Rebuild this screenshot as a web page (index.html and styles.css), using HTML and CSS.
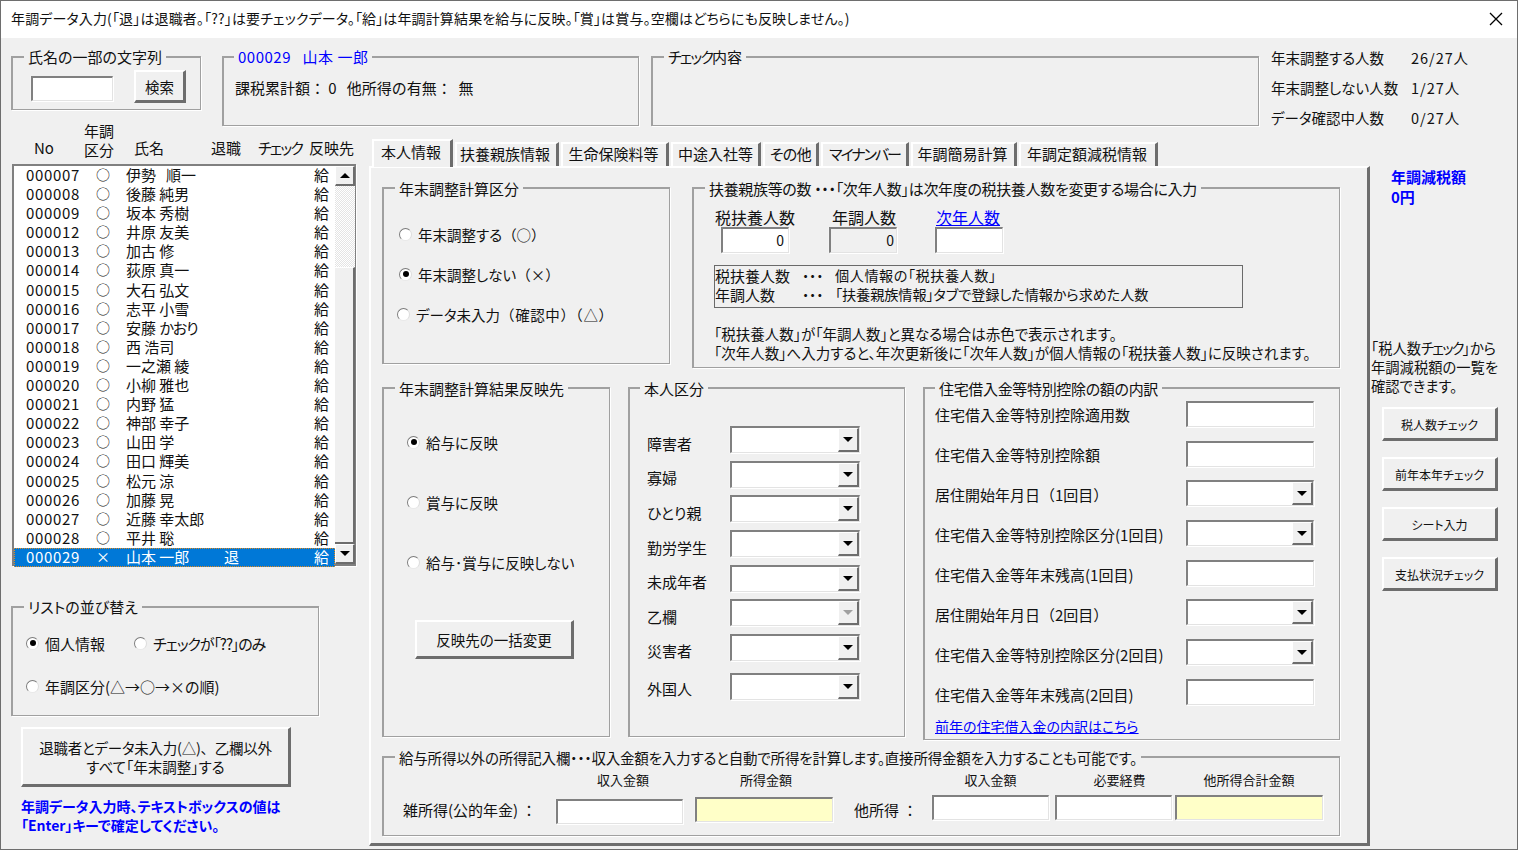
FILE: index.html
```html
<!DOCTYPE html>
<html lang="ja">
<head>
<meta charset="utf-8">
<title>年調データ入力</title>
<link rel="stylesheet" href="styles.css">
</head>
<body>
<div class="window">
  <header class="titlebar">
    <span class="title">年調データ入力(「退」は退職者。「??」は要チェックデータ。「給」は年調計算結果を給与に反映。「賞」は賞与。空欄はどちらにも反映しません。)</span>
    <svg class="close" viewBox="0 0 14 14" width="14" height="14"><path d="M1 1L13 13M13 1L1 13" stroke="#000" stroke-width="1.3" fill="none"/></svg>
  </header>

  <section class="top">
    <div class="group g-search">
      <span class="legend">氏名の一部の文字列</span>
      <div class="search-row">
        <div class="field search-input"></div>
        <div class="btn search-btn">検索</div>
      </div>
    </div>
    <div class="group g-person">
      <span class="legend blue legend-id">000029&nbsp;&nbsp; 山本 一郎</span>
      <div class="person-line">課税累計額： 0&nbsp;&nbsp; 他所得の有無：&nbsp; 無</div>
    </div>
    <div class="group g-check"><span class="legend"><span class="cond">チェック</span>内容</span></div>
    <div class="stats">
      <span>年末調整する人数</span><span class="ratio">26/27人</span>
      <span>年末調整しない人数</span><span class="ratio">1/27人</span>
      <span>データ確認中人数</span><span class="ratio">0/27人</span>
    </div>
  </section>

  <section class="content">
    <aside class="left">
      <div class="list-head">
        <span>No</span><span>年調<br>区分</span><span>氏名</span><span>退職</span><span class="cond">チェック</span><span>反映先</span>
      </div>
      <div class="list">
        <div class="rows">
          <div class="row"><span>000007</span><span class="mark">○</span><span>伊勢&nbsp;&nbsp;&nbsp;順一</span><span></span><span>給</span></div>
          <div class="row"><span>000008</span><span class="mark">○</span><span>後藤 純男</span><span></span><span>給</span></div>
          <div class="row"><span>000009</span><span class="mark">○</span><span>坂本 秀樹</span><span></span><span>給</span></div>
          <div class="row"><span>000012</span><span class="mark">○</span><span>井原 友美</span><span></span><span>給</span></div>
          <div class="row"><span>000013</span><span class="mark">○</span><span>加古 修</span><span></span><span>給</span></div>
          <div class="row"><span>000014</span><span class="mark">○</span><span>荻原 真一</span><span></span><span>給</span></div>
          <div class="row"><span>000015</span><span class="mark">○</span><span>大石 弘文</span><span></span><span>給</span></div>
          <div class="row"><span>000016</span><span class="mark">○</span><span>志平 小雪</span><span></span><span>給</span></div>
          <div class="row"><span>000017</span><span class="mark">○</span><span>安藤 <span class="kana">かおり</span></span><span></span><span>給</span></div>
          <div class="row"><span>000018</span><span class="mark">○</span><span>西 浩司</span><span></span><span>給</span></div>
          <div class="row"><span>000019</span><span class="mark">○</span><span>一之瀬 綾</span><span></span><span>給</span></div>
          <div class="row"><span>000020</span><span class="mark">○</span><span>小柳 雅也</span><span></span><span>給</span></div>
          <div class="row"><span>000021</span><span class="mark">○</span><span>内野 猛</span><span></span><span>給</span></div>
          <div class="row"><span>000022</span><span class="mark">○</span><span>神部 幸子</span><span></span><span>給</span></div>
          <div class="row"><span>000023</span><span class="mark">○</span><span>山田 学</span><span></span><span>給</span></div>
          <div class="row"><span>000024</span><span class="mark">○</span><span>田口 輝美</span><span></span><span>給</span></div>
          <div class="row"><span>000025</span><span class="mark">○</span><span>松元 涼</span><span></span><span>給</span></div>
          <div class="row"><span>000026</span><span class="mark">○</span><span>加藤 晃</span><span></span><span>給</span></div>
          <div class="row"><span>000027</span><span class="mark">○</span><span>近藤 幸太郎</span><span></span><span>給</span></div>
          <div class="row"><span>000028</span><span class="mark">○</span><span>平井 聡</span><span></span><span>給</span></div>
          <div class="row selected"><span>000029</span><span class="mark">×</span><span>山本 一郎</span><span>退</span><span>給</span></div>
        </div>
        <div class="scrollbar">
          <div class="sb-btn"><i class="tri up"></i></div>
          <div class="sb-track"></div>
          <div class="sb-thumb"></div>
          <div class="sb-btn"><i class="tri"></i></div>
        </div>
      </div>

      <div class="group g-sort">
        <span class="legend">リストの並び替え</span>
        <div class="sort-row">
          <label class="radio"><i class="dot on"></i>個人情報</label>
          <label class="radio sort-second"><i class="dot"></i><span class="sort-check">チェックが「??」のみ</span></label>
        </div>
        <div class="sort-row next">
          <label class="radio"><i class="dot"></i>年調区分(△→○→×の順)</label>
        </div>
      </div>
      <div class="btn big-btn"><span><span class="big-first">退職者とデータ未入力(△)<span class="fw">、</span>乙欄以外</span><br>すべて「年末調整」する</span></div>
      <p class="notice">年調データ入力時、テキストボックスの値は<br>「Enter」キーで確定してください。</p>
    </aside>

    <main class="center">
      <nav class="tabs">
        <div class="tab active">本人情報</div>
        <div class="tab t2">扶養親族情報</div>
        <div class="tab t3">生命保険料等</div>
        <div class="tab t4">中途入社等</div>
        <div class="tab t5">その他</div>
        <div class="tab t6"><span class="cond2">マイナンバー</span></div>
        <div class="tab t7">年調簡易計算</div>
        <div class="tab t8">年調定額減税情報</div>
      </nav>
      <div class="panel">
        <div class="panel-row">
          <div class="group g-calc">
            <span class="legend">年末調整計算区分</span>
            <label class="radio"><i class="dot"></i><span>年末調整する<span class="fw">（○）</span></span></label>
            <label class="radio"><i class="dot on"></i><span>年末調整しない<span class="fw">（×）</span></span></label>
            <label class="radio shifted"><i class="dot"></i><span>データ未入力<span class="fw wide">（確認中）（△）</span></span></label>
          </div>
          <div class="group g-dep">
            <span class="legend tight">扶養親族等の数 ・・・「次年人数」は次年度の税扶養人数を変更する場合に入力</span>
            <div class="counts">
              <div class="count c1"><span class="big">税扶養人数</span><div class="field num">0</div></div>
              <div class="count c2"><span class="big">年調人数</span><div class="field num disabled">0</div></div>
              <div class="count c3"><a class="big link">次年人数</a><div class="field num"></div></div>
            </div>
            <div class="explain">
              <div class="ex-line"><span class="ex-k">税扶養人数</span><span class="ex-d">・・・</span><span class="ex-a">個人情報の「税扶養人数」</span></div>
              <div class="ex-line"><span class="ex-k">年調人数</span><span class="ex-d">・・・</span><span class="ex-b">「扶養親族情報」タブで登録した情報から求めた人数</span></div>
            </div>
            <p class="dep-note">「税扶養人数」が「年調人数」と異なる場合は赤色で表示されます。<br>「次年人数」へ入力すると、年次更新後に「次年人数」が個人情報の「税扶養人数」に反映されます。</p>
          </div>
        </div>

        <div class="panel-row r2">
          <div class="group g-ref">
            <span class="legend">年末調整計算結果反映先</span>
            <label class="radio"><i class="dot on"></i>給与に反映</label>
            <label class="radio"><i class="dot"></i>賞与に反映</label>
            <label class="radio"><i class="dot"></i>給与･賞与に反映しない</label>
            <div class="btn ref-btn">反映先の一括変更</div>
          </div>
          <div class="group g-self">
            <span class="legend">本人区分</span>
            <div class="kv"><span>障害者</span><div class="field combo"><b><i class="tri"></i></b></div></div>
            <div class="kv"><span>寡婦</span><div class="field combo"><b><i class="tri"></i></b></div></div>
            <div class="kv"><span>ひとり親</span><div class="field combo"><b><i class="tri"></i></b></div></div>
            <div class="kv"><span>勤労学生</span><div class="field combo"><b><i class="tri"></i></b></div></div>
            <div class="kv"><span>未成年者</span><div class="field combo"><b><i class="tri"></i></b></div></div>
            <div class="kv"><span>乙欄</span><div class="field combo"><b><i class="tri off"></i></b></div></div>
            <div class="kv near"><span>災害者</span><div class="field combo"><b><i class="tri"></i></b></div></div>
            <div class="kv near last"><span>外国人</span><div class="field combo"><b><i class="tri"></i></b></div></div>
          </div>
          <div class="group g-loan">
            <span class="legend tight">住宅借入金等特別控除の額の内訳</span>
            <div class="lr"><span>住宅借入金等特別控除適用数</span><div class="field"></div></div>
            <div class="lr"><span>住宅借入金等特別控除額</span><div class="field"></div></div>
            <div class="lr"><span>居住開始年月日<span class="fw">（1回目）</span></span><div class="field combo"><b><i class="tri"></i></b></div></div>
            <div class="lr"><span>住宅借入金等特別控除区分(1回目)</span><div class="field combo"><b><i class="tri"></i></b></div></div>
            <div class="lr"><span>住宅借入金等年末残高(1回目)</span><div class="field"></div></div>
            <div class="lr"><span>居住開始年月日<span class="fw">（2回目）</span></span><div class="field combo"><b><i class="tri"></i></b></div></div>
            <div class="lr"><span>住宅借入金等特別控除区分(2回目)</span><div class="field combo"><b><i class="tri"></i></b></div></div>
            <div class="lr"><span>住宅借入金等年末残高(2回目)</span><div class="field"></div></div>
            <a class="link loan-link">前年の住宅借入金の内訳はこちら</a>
          </div>
        </div>

        <div class="group g-other">
          <span class="legend other-legend">給与所得以外の所得記入欄・・・収入金額を入力すると自動で所得を計算します。直接所得金額を入力することも可能です。</span>
          <div class="other-grid">
            <span></span><span class="hd n1">収入金額</span><span></span><span class="hd n2">所得金額</span><span></span><span></span><span class="hd">収入金額</span><span></span><span class="hd n3">必要経費</span><span></span><span class="hd">他所得合計金額</span>
            <span class="ol">雑所得(公的年金)<span class="fw"> ：</span></span><div class="field f1"></div><span></span><div class="field yellow f2"></div><span></span><span class="ol">他所得<span class="fw"> ：</span></span><div class="field"></div><span></span><div class="field"></div><span></span><div class="field yellow"></div>
          </div>
        </div>
      </div>
    </main>

    <aside class="right">
      <p class="tax">年調減税額<br>0円</p>
      <p class="hint">「税人数<span class="cond">チェック</span>」から<br>年調減税額の一覧を<br>確認できます。</p>
      <div class="btn side-btn">税人数チェック</div>
      <div class="btn side-btn">前年本年チェック</div>
      <div class="btn side-btn">シート入力</div>
      <div class="btn side-btn">支払状況チェック</div>
    </aside>
  </section>
</div>
</body>
</html>
```
FILE: styles.css
```css
* { box-sizing: border-box; }
html, body { margin: 0; padding: 0; }
body {
  font-family: "Noto Sans CJK JP", "Noto Sans", sans-serif;
  font-size: 15px;
  font-feature-settings: "palt";
  color: #111;
  background: #f0f0f0;
}
p { margin: 0; }
i, b { display: block; font-style: normal; }
.fw { font-feature-settings: normal; }
.wide { letter-spacing: .6px; }
.cond { letter-spacing: -1.8px; }
.cond2 { letter-spacing: -2px; }
.kana { letter-spacing: -1px; }

.window {
  width: 1518px; height: 850px;
  border: 1px solid #6e6e6e;
  background: #f0f0f0;
  overflow: hidden;
}
.titlebar {
  height: 37px; background: #fff;
  display: flex; align-items: center; justify-content: space-between;
  padding: 0 15px 0 10px;
  font-size: 14px;
}
.title { padding-bottom: 3px; letter-spacing: .14px; }
.close { margin-bottom: 1px; margin-right: -1px; }

/* group boxes */
.group {
  position: relative;
  border-style: solid;
  border-color: #a0a0a0;
  border-width: 2px 1px 1px 2px;
  box-shadow: 1px 1px 0 #fff;
  flex: none;
}
.legend {
  position: absolute; top: -11px; left: 11px;
  padding: 0 4px;
  background: #f0f0f0;
  line-height: 20px;
  white-space: nowrap;
}
.panel .legend { top: -10px; }
.g-self .legend, .g-loan .legend { left: 10px; }
.legend-id { left: 10px; letter-spacing: .5px; }
.tight { letter-spacing: -.33px; }
.other-legend { font-size: 14.5px; letter-spacing: -.19px; }
.blue { color: #0000ff; }

/* common controls */
.btn {
  background: #f0f0f0;
  border-style: solid;
  border-color: #fff #6d6d6d #6d6d6d #fff;
  border-width: 2px 3px 3px 2px;
  display: flex; align-items: center; justify-content: center;
  text-align: center;
  font-size: 14.5px;
}
.field {
  background: #fff;
  border-style: solid;
  border-color: #808080 #e3e3e3 #e3e3e3 #808080;
  border-width: 2px 1px 1px 2px;
  box-shadow: 1px 1px 0 #fff, -1px 0 0 #f4f4f4;
  height: 26px;
}
.combo { display: flex; justify-content: flex-end; }
.combo b {
  width: 21px; height: 100%;
  background: #f0f0f0;
  border-style: solid;
  border-color: #fff #6d6d6d #6d6d6d #fff;
  border-width: 1px 2px 2px 1px;
  display: flex; align-items: center; justify-content: center;
}
.tri {
  width: 0; height: 0;
  border-left: 5px solid transparent;
  border-right: 5px solid transparent;
  border-top: 5px solid #000;
}
.tri.up { border-top: 0; border-bottom: 5px solid #000; }
.tri.off { border-top-color: #a0a0a0; }

.radio {
  display: flex; align-items: center;
  height: 20px; white-space: nowrap;
}
.dot {
  width: 13px; height: 13px; margin-right: 6px;
  flex: none;
  border-radius: 50%;
  background: #fff;
  border: 1px solid;
  border-color: #7c7c7c #dcdcdc #e8e8e8 #7c7c7c;
  display: flex; align-items: center; justify-content: center;
}
.dot.on::after {
  content: ""; width: 6px; height: 6px;
  border-radius: 50%; background: #000;
}
.link { color: #0000ff; text-decoration: underline; }

/* top */
.top { display: flex; margin-left: 10px; padding-top: 18px; height: 86px; }
.g-search { width: 190px; height: 54px; }
.search-row { display: flex; padding: 12px 0 0 18px; }
.search-input { width: 82px; height: 25px; margin-top: 6px; }
.search-btn { width: 52px; height: 33px; margin-left: 21px; }
.g-person { width: 417px; height: 70px; margin-left: 21px; }
.person-line { padding: 20px 0 0 11px; line-height: 20px; font-feature-settings: normal; white-space: nowrap; }
.g-check { width: 608px; height: 70px; margin-left: 12px; }
.stats {
  margin: -14px 0 0 12px;
  display: grid; grid-template-columns: 140px auto;
  grid-auto-rows: 30px; align-items: center;
  font-size: 14.5px;
}
.ratio { letter-spacing: .95px; }

/* content columns */
.content { display: flex; margin-left: 10px; }
.left { width: 358px; flex: none; }
.center { width: 1001px; flex: none; padding-top: 14px; }
.right { flex: none; padding-left: 1px; }

/* list */
.list-head {
  height: 36px; display: flex; align-items: flex-end;
  padding: 0 0 1px 23px;
  line-height: 19px;
}
.list-head span { flex: none; padding-bottom: 2px; white-space: nowrap; }
.list-head span:nth-child(1) { width: 50px; }
.list-head span:nth-child(2) { width: 50px; padding-bottom: 0; }
.list-head span:nth-child(3) { width: 77px; }
.list-head span:nth-child(4) { width: 47px; }
.list-head span:nth-child(5) { width: 51px; }
.list {
  margin: 4px 0 0 1px; width: 344px; height: 402px;
  background: #fff;
  border-style: solid;
  border-color: #808080;
  border-width: 2px 1px 2px 2px;
  box-shadow: 1px 1px 0 #fff;
  display: flex;
}
.rows { flex: 1; min-width: 0; display: flex; flex-direction: column; }
.row {
  height: 19.1px; flex: none;
  display: grid;
  grid-template-columns: 62px 30px 106px 90px 20px;
  padding-left: 12px;
  line-height: 17px;
  white-space: nowrap;
}
.row > span:first-child { letter-spacing: .65px; }
.row > span:nth-child(3) { padding-left: 8px; }
.mark { text-align: center; font-size: 14px; }
.selected {
  background: #0078d7; color: #fff;
  outline: 1px dotted #e08a20; outline-offset: -1px;
}
.scrollbar { width: 20px; flex: none; display: flex; flex-direction: column; }
.sb-btn {
  height: 20px; flex: none;
  background: #f0f0f0;
  border-style: solid;
  border-color: #fff #6d6d6d #6d6d6d #fff;
  border-width: 1px 2px 2px 1px;
  display: flex; align-items: center; justify-content: center;
}
.sb-track {
  height: 81px; flex: none;
  background: repeating-conic-gradient(#fff 0 25%, #e4e4e4 0 50%) 0 0 / 2px 2px;
}
.sb-thumb {
  flex: 1;
  background: #f0f0f0;
  border-top: 1px solid #fff;
  border-bottom: 2px solid #6d6d6d;
  border-right: 2px solid #6d6d6d;
}

/* sort group */
.g-sort { width: 308px; height: 110px; margin-top: 40px; }
.sort-row { display: flex; padding: 25px 0 0 13px; }
.sort-row.next { padding-top: 23px; }
.sort-second { margin-left: 29px; }
.sort-check { letter-spacing: -1.1px; }
.big-btn { width: 270px; height: 60px; margin: 11px 0 0 10px; line-height: 19px; }
.big-first { letter-spacing: -.25px; }
.notice {
  margin: 10px 0 0 10px;
  color: #0000ff; font-weight: 700;
  line-height: 19px; font-size: 14px;
}

/* tabs */
.tabs { display: flex; align-items: flex-end; height: 28px; padding-left: 3px; }
.tab {
  height: 24px; margin-right: 2px; flex: none;
  border-style: solid;
  border-color: #fff #6d6d6d transparent #fff;
  border-width: 2px 3px 0 2px;
  display: flex; align-items: center; justify-content: center;
  padding-bottom: 3px;
  background: #f0f0f0;
}
.tab.active { height: 28px; width: 81px; align-items: flex-start; padding: 0 2px 0 0; margin-bottom: -1px; position: relative; }
.t2 { width: 104px; padding-right: 3px; }
.t3 { width: 108px; padding-right: 2px; }
.t4 { width: 90px; }
.t5 { width: 56px; letter-spacing: -.6px; }
.t6 { width: 88px; }
.t7 { width: 106px; padding-right: 2px; }
.t8 { width: 139px; padding-right: 2px; }
.panel {
  width: 1001px; height: 680px;
  border-style: solid;
  border-color: #fff #6d6d6d #6d6d6d #fff;
  border-width: 2px 3px 3px 2px;
  padding: 19px 0 0 11px;
}
.panel-row { display: flex; }
.panel-row.r2 { margin-top: 19px; }

/* 年末調整計算区分 */
.g-calc { width: 288px; height: 177px; margin-right: 22px; padding: 35px 0 0 15px; }
.g-calc .radio { margin-bottom: 20px; font-size: 14.5px; }
.g-calc .shifted { margin-left: -2px; }
.g-dep { width: 648px; height: 181px; }
.counts { display: flex; padding: 18px 0 0 21px; }
.count { flex: none; }
.big { display: block; height: 20px; line-height: 20px; font-size: 16px; white-space: nowrap; }
.c1 { width: 114px; }
.c2 { width: 106px; }
.c1 .num { margin-left: 6px; }
.c2 .big { margin-left: 3px; }
.c3 .big { margin-left: 1px; }
.num {
  width: 68px; height: 26px;
  text-align: right; padding-right: 4px;
  line-height: 23px; font-size: 14px;
}
.c2 .num { padding-right: 2px; }
.disabled { background: #f0f0f0; }
.explain {
  margin: 12px 0 0 20px; width: 529px; height: 43px;
  border: 1px solid #6a6a6a;
  line-height: 19px; font-size: 14.2px;
}
.ex-line { display: flex; }
.ex-k { width: 87px; font-size: 15px; }
.ex-d { width: 33px; }
.ex-a { letter-spacing: .5px; }
.ex-b { letter-spacing: -.1px; }
.dep-note { margin: 16px 0 0 20px; line-height: 19px; font-size: 14.5px; white-space: nowrap; }

/* 反映先 */
.g-ref { width: 228px; height: 350px; margin-right: 18px; padding: 43px 0 0 23px; }
.g-ref .radio { margin-bottom: 40px; font-size: 14.5px; }
.ref-btn { width: 159px; height: 39px; margin: 48px 0 0 8px; }

/* 本人区分 */
.g-self { width: 277px; height: 350px; margin-right: 18px; padding: 37px 0 0 17px; }
.kv { display: flex; align-items: center; height: 27px; margin-bottom: 7.7px; }
.kv span { width: 83px; padding-top: 7px; flex: none; }
.kv.near span { padding-top: 5px; }
.kv.last { margin-top: 12px; }
.kv.last span { padding-top: 3px; }
.kv .field { width: 130px; height: 27px; }

/* 住宅借入金 */
.g-loan { width: 417px; height: 353px; padding: 12px 0 0 10px; }
.lr { display: flex; height: 39.7px; align-items: flex-start; white-space: nowrap; }
.lr > span { width: 251px; flex: none; line-height: 28px; }
.lr:nth-child(n+4) > span { padding-top: 1px; }
.lr:nth-child(n+7) > span { padding-top: 2px; }
.lr .field { width: 128px; }
.loan-link { display: block; margin-top: -3px; line-height: 20px; font-size: 14px; }

/* 他所得 */
.g-other { width: 958px; height: 80px; margin-top: 16px; padding: 12px 0 0 19px; }
.other-grid {
  display: grid;
  grid-template-columns: 153px 127px 12px 138px 21px 78px 117px 6px 117px 3px 148px;
  grid-template-rows: 20px 25px;
  row-gap: 5px;
  align-items: start;
}
.hd { text-align: center; font-size: 13px; line-height: 20px; white-space: nowrap; }
.n1 { padding-left: 7px; }
.n2 { padding-left: 4px; }
.n3 { padding-left: 12px; }
.ol { line-height: 20px; margin-top: 5px; white-space: nowrap; }
.other-grid .field { height: 25px; }
.f1 { margin-top: 4px; }
.f2 { margin-top: 2px; }
.yellow { background: #ffffc8; }

/* right */
.tax {
  margin: 43px 0 0 20px;
  color: #0000ff; font-weight: 700;
  line-height: 20px;
}
.hint { margin-top: 131px; line-height: 19px; font-size: 14.3px; white-space: nowrap; }
.side-btn { width: 116px; height: 34px; margin: 12px 0 0 11px; font-size: 12px; white-space: nowrap; padding-top: 1px; }
.side-btn + .side-btn { margin-top: 16px; }
```
